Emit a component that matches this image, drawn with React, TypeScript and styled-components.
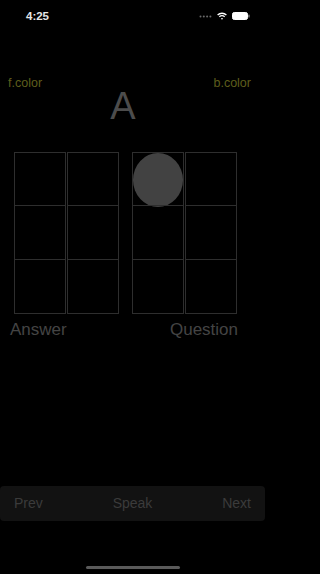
import { FC } from 'react'
import styled, { createGlobalStyle } from 'styled-components'

const GlobalStyle = createGlobalStyle`
    html, body {
        margin: 0;
        padding: 0;
        background: #000;
    }
    body {
        font-family: "Liberation Sans", Arial, sans-serif;
    }
`

const Page = styled.div`
    width: 265px;
    height: 574px;
    background: #000;
    display: flex;
    flex-direction: column;
    overflow: hidden;
`

const StatusBar = styled.div`
    height: 30px;
    box-sizing: border-box;
    padding: 9px 15px 0 26px;
    display: flex;
    justify-content: space-between;
    align-items: flex-start;
`

const Time = styled.span`
    color: #e6e6e6;
    font-size: 11.5px;
    line-height: 14px;
    font-weight: 700;
`

const StatusIcons = styled.div`
    display: flex;
    align-items: center;
    gap: 5px;
    margin-top: 3px;
`

const ColorRow = styled.div`
    margin-top: 46px;
    padding: 0 14px 0 8px;
    display: flex;
    justify-content: space-between;
`

const ColorLabel = styled.span`
    color: #5e5e1c;
    font-size: 12.5px;
    line-height: 14px;
`

const Letter = styled.div`
    margin-top: 1px;
    text-align: center;
    color: #4c4c4c;
    font-size: 38px;
    line-height: 30px;
    padding-right: 19px;
`

const Boards = styled.div`
    margin-top: 31px;
    padding-left: 14px;
    display: flex;
    gap: 13px;
`

const Board = styled.div`
    display: grid;
    grid-template-columns: 52px 52px;
    grid-auto-rows: 54px;
    column-gap: 1px;
    row-gap: 0;
    & > div:nth-child(n + 3) {
        margin-top: -1px;
    }
`

const Cell = styled.div`
    position: relative;
    box-sizing: border-box;
    border: 1px solid #2e2e2e;
`

const Dot = styled.div`
    position: absolute;
    left: 0;
    top: 0;
    width: 50px;
    height: 54px;
    border-radius: 50%;
    background: #424242;
`

const Labels = styled.div`
    margin-top: 6px;
    padding: 0 27px 0 10px;
    display: flex;
    justify-content: space-between;
`

const Label = styled.span`
    color: #444;
    font-size: 17px;
    line-height: 20px;
`

const BottomBar = styled.div`
    margin-top: auto;
    height: 35px;
    background: #121212;
    border-radius: 4px;
    padding: 0 14px;
    display: flex;
    justify-content: space-between;
    align-items: center;
`

const BarButton = styled.span`
    color: #3b3b3b;
    font-size: 14px;
    line-height: 35px;
`

const HomeArea = styled.div`
    height: 53px;
    display: flex;
    justify-content: center;
    align-items: flex-end;
    padding-bottom: 5px;
    box-sizing: border-box;
`

const HomeIndicator = styled.div`
    width: 94px;
    height: 3px;
    border-radius: 2px;
    background: #5a5a5a;
`

const Signal: FC = () => (
    <svg width="13" height="3" viewBox="0 0 13 3">
        {[0, 1, 2, 3].map(i => (
            <circle key={i} cx={1.5 + i * 3.3} cy={1.5} r={1} fill="#6a6a6a" />
        ))}
    </svg>
)

const Wifi: FC = () => (
    <svg width="10" height="8" viewBox="0 0 10 8">
        <path d="M0.6 3 A6.4 6.4 0 0 1 9.4 3" stroke="#fff" strokeWidth="1.3" fill="none" />
        <path d="M2.3 4.8 A4 4 0 0 1 7.7 4.8" stroke="#fff" strokeWidth="1.3" fill="none" />
        <path d="M3.9 6.6 L5 7.7 L6.1 6.6 A1.6 1.6 0 0 0 3.9 6.6 Z" fill="#fff" />
    </svg>
)

const Battery: FC = () => (
    <svg width="18" height="8" viewBox="0 0 18 8">
        <rect x="0.5" y="0.5" width="15" height="7" rx="1.8" fill="#fff" stroke="#fff" />
        <rect x="16.3" y="2.6" width="1.3" height="2.8" rx="0.5" fill="#888" />
    </svg>
)

const Grid: FC<{ dotAt?: number }> = ({ dotAt }) => (
    <Board>
        {Array.from({ length: 6 }).map((_, i) => (
            <Cell key={i}>{dotAt === i && <Dot />}</Cell>
        ))}
    </Board>
)

const App: FC = () => {
    return (
        <>
            <GlobalStyle />
            <Page>
                <StatusBar>
                    <Time>4:25</Time>
                    <StatusIcons>
                        <Signal />
                        <Wifi />
                        <Battery />
                    </StatusIcons>
                </StatusBar>
                <ColorRow>
                    <ColorLabel>f.color</ColorLabel>
                    <ColorLabel>b.color</ColorLabel>
                </ColorRow>
                <Letter>A</Letter>
                <Boards>
                    <Grid />
                    <Grid dotAt={0} />
                </Boards>
                <Labels>
                    <Label>Answer</Label>
                    <Label>Question</Label>
                </Labels>
                <BottomBar>
                    <BarButton>Prev</BarButton>
                    <BarButton>Speak</BarButton>
                    <BarButton>Next</BarButton>
                </BottomBar>
                <HomeArea>
                    <HomeIndicator />
                </HomeArea>
            </Page>
        </>
    )
}

export default App
